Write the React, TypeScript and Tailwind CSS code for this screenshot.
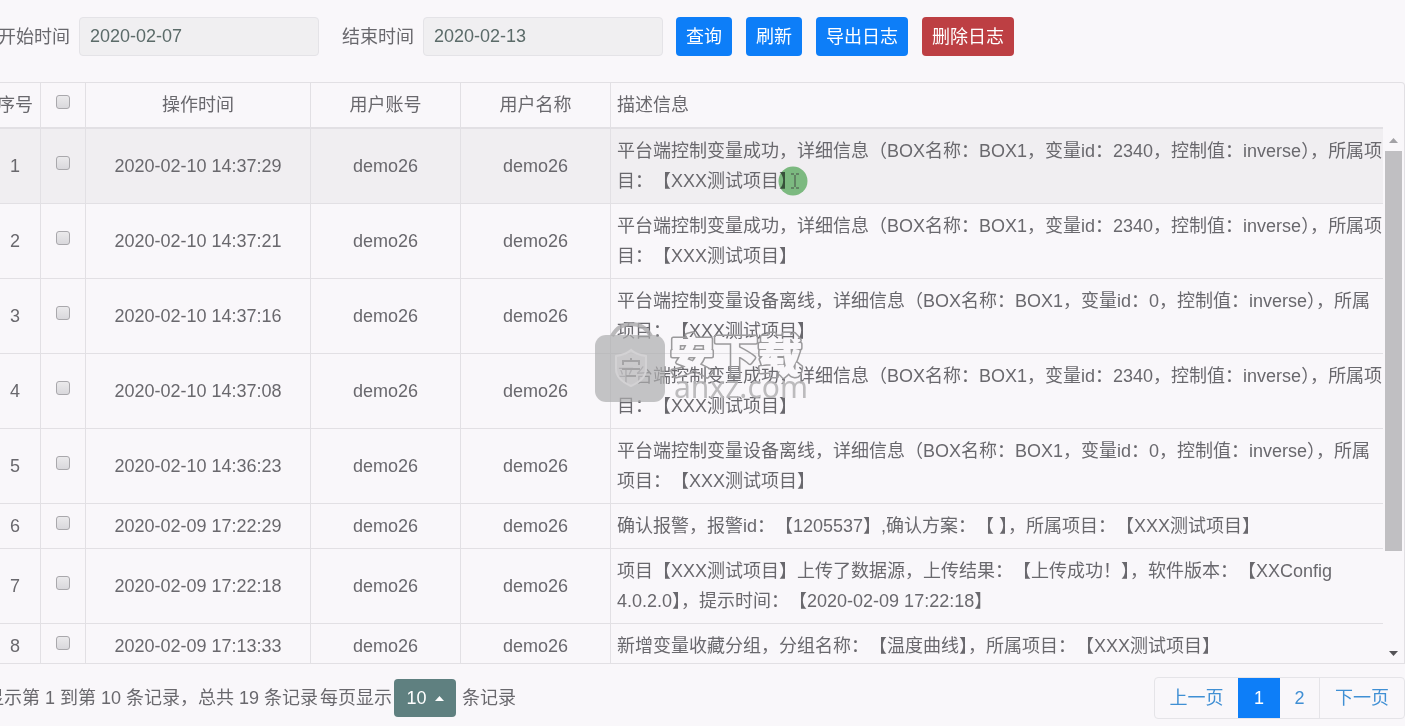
import { useState } from 'react';

interface LogRow {
  id: number;
  time: string;
  account: string;
  name: string;
  message: string;
}

const OK_MESSAGE =
  '平台端控制变量成功，详细信息（BOX名称：BOX1，变量id：2340，控制值：inverse），所属项目：【XXX测试项目】';
const OFFLINE_MESSAGE =
  '平台端控制变量设备离线，详细信息（BOX名称：BOX1，变量id：0，控制值：inverse），所属项目：【XXX测试项目】';

const LOGS: LogRow[] = [
  { id: 1, time: '2020-02-10 14:37:29', account: 'demo26', name: 'demo26', message: OK_MESSAGE },
  { id: 2, time: '2020-02-10 14:37:21', account: 'demo26', name: 'demo26', message: OK_MESSAGE },
  { id: 3, time: '2020-02-10 14:37:16', account: 'demo26', name: 'demo26', message: OFFLINE_MESSAGE },
  { id: 4, time: '2020-02-10 14:37:08', account: 'demo26', name: 'demo26', message: OK_MESSAGE },
  { id: 5, time: '2020-02-10 14:36:23', account: 'demo26', name: 'demo26', message: OFFLINE_MESSAGE },
  {
    id: 6,
    time: '2020-02-09 17:22:29',
    account: 'demo26',
    name: 'demo26',
    message: '确认报警，报警id：【1205537】,确认方案：【 】，所属项目：【XXX测试项目】',
  },
  {
    id: 7,
    time: '2020-02-09 17:22:18',
    account: 'demo26',
    name: 'demo26',
    message:
      '项目【XXX测试项目】上传了数据源，上传结果：【上传成功！】，软件版本：【XXConfig 4.0.2.0】，提示时间：【2020-02-09 17:22:18】',
  },
  {
    id: 8,
    time: '2020-02-09 17:13:33',
    account: 'demo26',
    name: 'demo26',
    message: '新增变量收藏分组，分组名称：【温度曲线】，所属项目：【XXX测试项目】',
  },
];

const CELL = 'border-r border-b border-[#e2e0e4] py-[7px] text-center';
const HEAD = 'border-r border-b-2 border-[#e2e0e4] py-[7px] text-center font-normal';
const INPUT =
  'h-[39px] w-60 rounded border border-[#e4e3e7] bg-[#f0eff1] px-2.5 text-[#5b6b69] outline-none';
const BUTTON = 'h-[39px] rounded px-2.5 text-white';
const PAGE = 'flex h-10 items-center justify-center text-[#3f8fd4]';

function Checkbox({ label }: { label: string }) {
  return (
    <input
      type="checkbox"
      aria-label={label}
      className="mb-2 inline-block size-3.5 appearance-none rounded-[3px] border border-[#a9a8ac] bg-linear-to-b from-[#ebeaec] to-[#d9d8dc] align-middle checked:bg-[#0d7ef8]"
    />
  );
}

// full-width marks keep their space, except a comma right after a closing bracket
function Message({ text }: { text: string }) {
  return (
    <span className="[text-spacing-trim:space-all]">
      {text.split(/([）】]，)/).map((part, i) =>
        i % 2 ? <span key={i} className="[text-spacing-trim:normal]">{part}</span> : part
      )}
    </span>
  );
}

function FilterBar() {
  return (
    <form className="-ml-0.5 flex items-center gap-[9px] pt-[17px]" onSubmit={(e) => e.preventDefault()}>
      <label htmlFor="start" className="shrink-0">开始时间</label>
      <input id="start" readOnly value="2020-02-07" className={INPUT} />
      <label htmlFor="end" className="ml-3.5 shrink-0">结束时间</label>
      <input id="end" readOnly value="2020-02-13" className={INPUT} />
      <div className="ml-1 flex shrink-0 gap-3.5">
        <button type="button" className={`${BUTTON} bg-[#0d7ef8]`}>查询</button>
        <button type="button" className={`${BUTTON} bg-[#0d7ef8]`}>刷新</button>
        <button type="button" className={`${BUTTON} bg-[#0d7ef8]`}>导出日志</button>
        <button type="button" className={`${BUTTON} bg-[#bd3f43]`}>删除日志</button>
      </div>
    </form>
  );
}

function LogTable() {
  return (
    <div className="mt-[26px] flex max-h-[582px] overflow-hidden rounded-tr border-t border-r border-b border-[#e2e0e4]">
      <div className="-ml-2.5 min-w-0 flex-1">
        <table className="w-full table-fixed border-separate border-spacing-0">
          <colgroup>
            <col className="w-[51px]" />
            <col className="w-[45px]" />
            <col className="w-[225px]" />
            <col className="w-[150px]" />
            <col className="w-[150px]" />
            <col />
          </colgroup>
          <thead>
            <tr>
              <th className={HEAD}>序号</th>
              <th className={HEAD}><Checkbox label="全选" /></th>
              <th className={HEAD}>操作时间</th>
              <th className={HEAD}>用户账号</th>
              <th className={HEAD}>用户名称</th>
              <th className="border-b-2 border-[#e2e0e4] py-[7px] pl-1.5 text-left font-normal">描述信息</th>
            </tr>
          </thead>
          <tbody>
            {LOGS.map((log) => (
              <tr key={log.id} className={log.id === 1 ? 'bg-[#f0eef1]' : ''}>
                <td className={CELL}>{log.id}</td>
                <td className={CELL}><Checkbox label={`选择 ${log.id}`} /></td>
                <td className={CELL}>{log.time}</td>
                <td className={CELL}>{log.account}</td>
                <td className={CELL}>{log.name}</td>
                <td className="border-b border-[#e2e0e4] py-[7px] pl-1.5"><Message text={log.message} /></td>
              </tr>
            ))}
          </tbody>
        </table>
      </div>
      <div className="flex w-[21px] flex-col items-center pt-[55px] pb-[7px]">
        <svg className="h-[5px] w-[9px] fill-[#a3a2a6]" viewBox="0 0 9 5"><path d="M0 5 4.500 0 9 5z" /></svg>
        <div className="mt-2 h-[400px] w-[17px] bg-[#c0bfc2]" />
        <svg className="mt-auto h-[5px] w-[9px] fill-[#545357]" viewBox="0 0 9 5"><path d="M0 0h9L4.500 5z" /></svg>
      </div>
    </div>
  );
}

function Footer() {
  const [size] = useState(10);
  return (
    <div className="flex items-center justify-between pt-[13px]">
      <div className="-ml-3.5 flex items-center gap-0.5 whitespace-nowrap">
        <span>显示第 1 到第 10 条记录，总共 19 条记录</span>
        <span>每页显示</span>
        <button
          type="button"
          aria-haspopup="listbox"
          className="mr-1 flex h-[38px] w-[62px] items-center justify-center gap-2 rounded bg-[#5f8080] text-white"
        >
          {size}
          <svg className="h-[5px] w-[9px] fill-white" viewBox="0 0 9 5"><path d="M0 5 4.500 0 9 5z" /></svg>
        </button>
        <span>条记录</span>
      </div>
      <nav className="flex overflow-hidden rounded border border-[#e5e4e8]">
        <a href="#prev" className={`${PAGE} w-[83px]`}>上一页</a>
        <a href="#1" aria-current="page" className="-my-px flex w-[42px] items-center justify-center bg-[#0d7ef8] text-white">1</a>
        <a href="#2" className={`${PAGE} w-10 border-r border-[#e5e4e8]`}>2</a>
        <a href="#next" className={`${PAGE} w-[84px]`}>下一页</a>
      </nav>
    </div>
  );
}

function Watermark() {
  return (
    <div className="pointer-events-none fixed inset-0 flex items-center justify-center">
      <svg className="h-[82px] w-[216px]" viewBox="0 0 216 82">
        <path d="M17 14C22 5 28 2 36 2s15 3 20 12" fill="none" stroke="#aaa9ab" strokeOpacity="0.8" strokeWidth="4" />
        <rect x="0" y="13" width="70" height="67" rx="11" fill="#adacae" fillOpacity="0.7" />
        <path
          d="M36 28c4 4 9 5 15 6v13c0 8-6 13-15 17-9-4-15-9-15-17V34c6-1 11-2 15-6z"
          fill="#d4d3d5"
          fillOpacity="0.4"
          stroke="#d3d2d4"
          strokeWidth="2"
        />
        <path d="M28 43v-4h16v4M36 36v3M27 47h18M31 54h10" fill="none" stroke="#a5a4a6" strokeWidth="2" />
        <mask id="brand-outline" maskUnits="userSpaceOnUse" x="70" y="0" width="146" height="82">
          <rect x="70" y="0" width="146" height="82" fill="white" />
          <text
            x="75"
            y="50"
            fontSize="44"
            fontWeight="700"
            stroke="black"
            strokeWidth="2"
            strokeLinejoin="round"
            fontFamily="Noto Sans CJK SC, sans-serif"
          >
            安下载
          </text>
        </mask>
        <text
          x="75"
          y="50"
          fontSize="44"
          fontWeight="700"
          fill="#9b9a9c"
          stroke="#9b9a9c"
          strokeWidth="5"
          strokeLinejoin="round"
          fontFamily="Noto Sans CJK SC, sans-serif"
          mask="url(#brand-outline)"
        >
          安下载
        </text>
        <text
          x="79"
          y="76"
          fontSize="30"
          fill="#b5b4b6"
          fillOpacity="0.9"
          fontFamily="Noto Sans, sans-serif"
        >
          anxz.com
        </text>
      </svg>
    </div>
  );
}

function Pointer() {
  return (
    <svg className="pointer-events-none absolute top-[166px] left-[778px] size-[30px] mix-blend-multiply" viewBox="0 0 30 30">
      <circle cx="15" cy="15" r="14.500" fill="#84c687" />
      <path d="M13 8h3M18 8h3M13 22h3M18 22h3M17 9v12" fill="none" stroke="#5d7a60" strokeWidth="1.500" />
    </svg>
  );
}

export default function App() {
  return (
    <main className="relative min-h-screen overflow-hidden bg-[#f9f7fa] font-['Liberation_Sans','Noto_Sans_CJK_SC',sans-serif] text-lg leading-[30px] text-[#69686d]" lang="zh-CN">
      <FilterBar />
      <LogTable />
      <Footer />
      <Pointer />
      <Watermark />
    </main>
  );
}
